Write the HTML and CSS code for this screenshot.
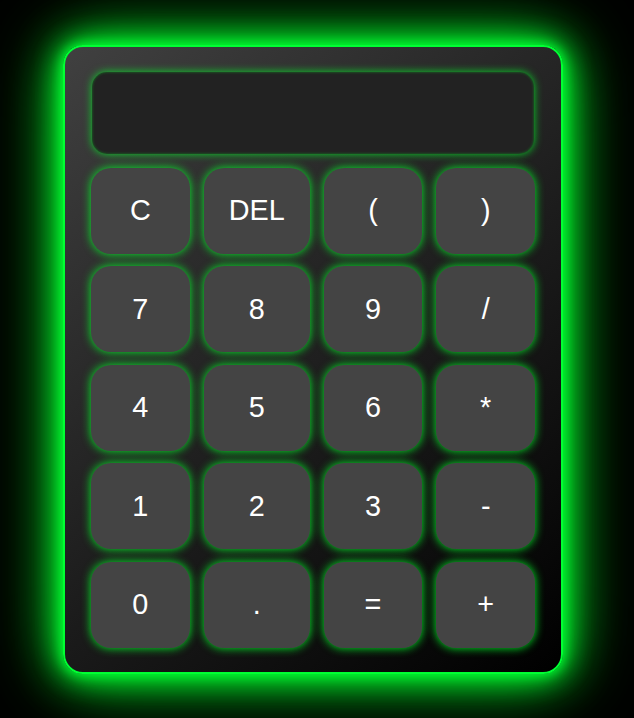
FILE: index.html
```html
<!DOCTYPE html>
<html lang="en">
<head>
<meta charset="utf-8">
<title>Calculator</title>
<link rel="stylesheet" href="styles.css">
</head>
<body>
  <div class="calculator">
    <div class="display"></div>
    <div class="keys">
      <button class="key">C</button>
      <button class="key">DEL</button>
      <button class="key">(</button>
      <button class="key">)</button>
      <button class="key">7</button>
      <button class="key">8</button>
      <button class="key">9</button>
      <button class="key">/</button>
      <button class="key">4</button>
      <button class="key">5</button>
      <button class="key">6</button>
      <button class="key">*</button>
      <button class="key">1</button>
      <button class="key">2</button>
      <button class="key">3</button>
      <button class="key">-</button>
      <button class="key">0</button>
      <button class="key">.</button>
      <button class="key">=</button>
      <button class="key">+</button>
    </div>
  </div>
</body>
</html>
```
FILE: styles.css
```css
html, body {
  margin: 0;
  padding: 0;
  background: #000;
}

body {
  min-height: 100vh;
  display: flex;
  justify-content: center;
  align-items: center;
  font-family: "Liberation Sans", Arial, sans-serif;
}

.calculator {
  width: 444px;
  margin-right: 8px;
  padding: 25px 26px 24px 26px;
  border: 2px solid #00ff33;
  border-radius: 20px;
  background: linear-gradient(140deg, #404040 0%, #1c1c1c 55%, #000 100%);
  box-shadow: 0 0 12px #00ff33, 0 0 28px #00ff33, 0 0 50px #00ee2a, 0 0 80px rgba(0, 220, 30, 0.8);
  display: flex;
  flex-direction: column;
  gap: 14px;
}

.display {
  height: 82px;
  margin: 0 1px;
  background: #222;
  border-radius: 15px;
  box-shadow: 0 0 8px rgba(0, 255, 40, 0.8), inset 0 0 3px rgba(0, 255, 40, 0.4);
}

.keys {
  display: grid;
  grid-template-columns: repeat(4, 1fr);
  grid-auto-rows: 86px;
  column-gap: 14px;
  row-gap: 12.5px;
}

.key {
  padding: 0 25px;
  border: none;
  border-radius: 20px;
  background: #444;
  color: #fff;
  font-family: "Liberation Sans", Arial, sans-serif;
  font-size: 28.8px;
  box-shadow: 0 0 10px rgba(0, 255, 40, 0.95);
}
```
